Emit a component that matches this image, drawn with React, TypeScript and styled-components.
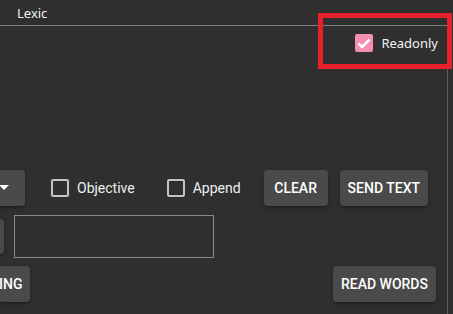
import React from "react";
import styled, { createGlobalStyle } from "styled-components";

const Global = createGlobalStyle`
  html, body { margin: 0; padding: 0; background: #303030; overflow: hidden; }
  body { width: 453px; height: 314px; font-family: "Noto Sans", sans-serif; }
`;

const Page = styled.div`
  position: relative;
  width: 453px;
  height: 314px;
  background: #2f2f2f;
  display: flex;
  flex-direction: column;
  overflow: hidden;
`;

const Header = styled.div`
  height: 26px;
  flex: none;
  border-bottom: 1px solid #7c7c7c;
  width: 447px;
  display: flex;
  align-items: center;
  padding-left: 17px;
  box-sizing: border-box;
  color: #f2f2f2;
  font-family: "Noto Sans", sans-serif;
  font-size: 13px;
`;

const Body = styled.div`
  flex: 1;
  width: 448px;
  border-right: 1px solid #5c5c5c;
  box-sizing: border-box;
  display: flex;
  flex-direction: column;
`;

const TopRow = styled.div`
  display: flex;
  justify-content: flex-end;
  align-items: center;
  height: 32px;
  margin-top: 1px;
  padding-right: 9px;
  gap: 8px;
`;

const PinkBox = styled.span`
  width: 18px;
  height: 18px;
  border-radius: 2px;
  background: #f48fb1;
  display: inline-flex;
  align-items: center;
  justify-content: center;
`;

const TopLabel = styled.span`
  color: #f2f2f2;
  font-family: "Noto Sans", sans-serif;
  font-size: 13px;
`;

const Row = styled.div<{ $top: number; $gap?: number }>`
  display: flex;
  align-items: center;
  margin-top: ${(p) => p.$top}px;
  gap: ${(p) => p.$gap ?? 0}px;
`;

const Btn = styled.button<{ $ml?: number; $mr?: number }>`
  height: 36px;
  min-width: 64px;
  padding: 0 8px;
  margin-left: ${(p) => p.$ml ?? 0}px;
  margin-right: ${(p) => p.$mr ?? 0}px;
  border: none;
  border-radius: 4px;
  background: #4a4a4a;
  color: #ffffff;
  font-family: Roboto, sans-serif;
  font-weight: 500;
  font-size: 14px;
  letter-spacing: 0;
  text-transform: uppercase;
  box-shadow: 0 3px 1px -2px rgba(0,0,0,0.2), 0 2px 2px 0 rgba(0,0,0,0.14), 0 1px 5px 0 rgba(0,0,0,0.12);
  display: inline-flex;
  align-items: center;
  justify-content: center;
  flex: none;
  box-sizing: border-box;
`;

const CaretBtn = styled(Btn)`
  min-width: 0;
  width: 60px;
  justify-content: flex-end;
  padding-right: 16px;
`;

const StubBtn = styled(Btn)`
  min-width: 0;
  width: 40px;
  height: 35px;
`;

const CutBtn = styled(Btn)`
  min-width: 0;
  padding-left: 0;
`;

const Check = styled.label<{ $ml: number }>`
  display: inline-flex;
  align-items: center;
  gap: 8px;
  margin-left: ${(p) => p.$ml}px;
  color: #f0f0f0;
  font-family: Roboto, sans-serif;
  font-size: 14px;
  flex: none;
`;

const EmptyBox = styled.span`
  width: 18px;
  height: 18px;
  border: 2px solid #c4c4c4;
  border-radius: 2px;
  box-sizing: border-box;
`;

const Input = styled.div`
  width: 200px;
  height: 43px;
  border: 1px solid #8a8a8a;
  box-sizing: border-box;
  margin-left: 10px;
  flex: none;
`;

const Spacer = styled.div`
  flex: 1;
`;

const Annotation = styled.div`
  position: absolute;
  left: 318px;
  top: 13px;
  width: 134px;
  height: 56px;
  border: 5px solid #e8202a;
  box-sizing: border-box;
  pointer-events: none;
`;

export default function App() {
  return (
    <>
      <Global />
      <Page>
        <Header>Lexic</Header>
        <Body>
          <TopRow>
            <PinkBox>
              <svg width="16" height="16" viewBox="0 0 24 24">
                <path d="M3.5 12.5l5.5 5.5L20.5 6.5" fill="none" stroke="#fff" strokeWidth="3.8" />
              </svg>
            </PinkBox>
            <TopLabel>Readonly</TopLabel>
          </TopRow>
          <Row $top={111}>
            <CaretBtn $ml={-35}>
              <svg width="10" height="6" viewBox="0 0 10 6">
                <path d="M0 0h10L5 5z" fill="#fff" />
              </svg>
            </CaretBtn>
            <Check $ml={26}>
              <EmptyBox />
              Objective
            </Check>
            <Check $ml={32}>
              <EmptyBox />
              Append
            </Check>
            <Btn $ml={23}>Clear</Btn>
            <Btn $ml={12}>Send text</Btn>
          </Row>
          <Row $top={9}>
            <StubBtn $ml={-36} />
            <Input />
          </Row>
          <Row $top={8}>
            <CutBtn $ml={-1}>ing</CutBtn>
            <Spacer />
            <Btn $mr={11}>Read words</Btn>
          </Row>
        </Body>
        <Annotation />
      </Page>
    </>
  );
}
